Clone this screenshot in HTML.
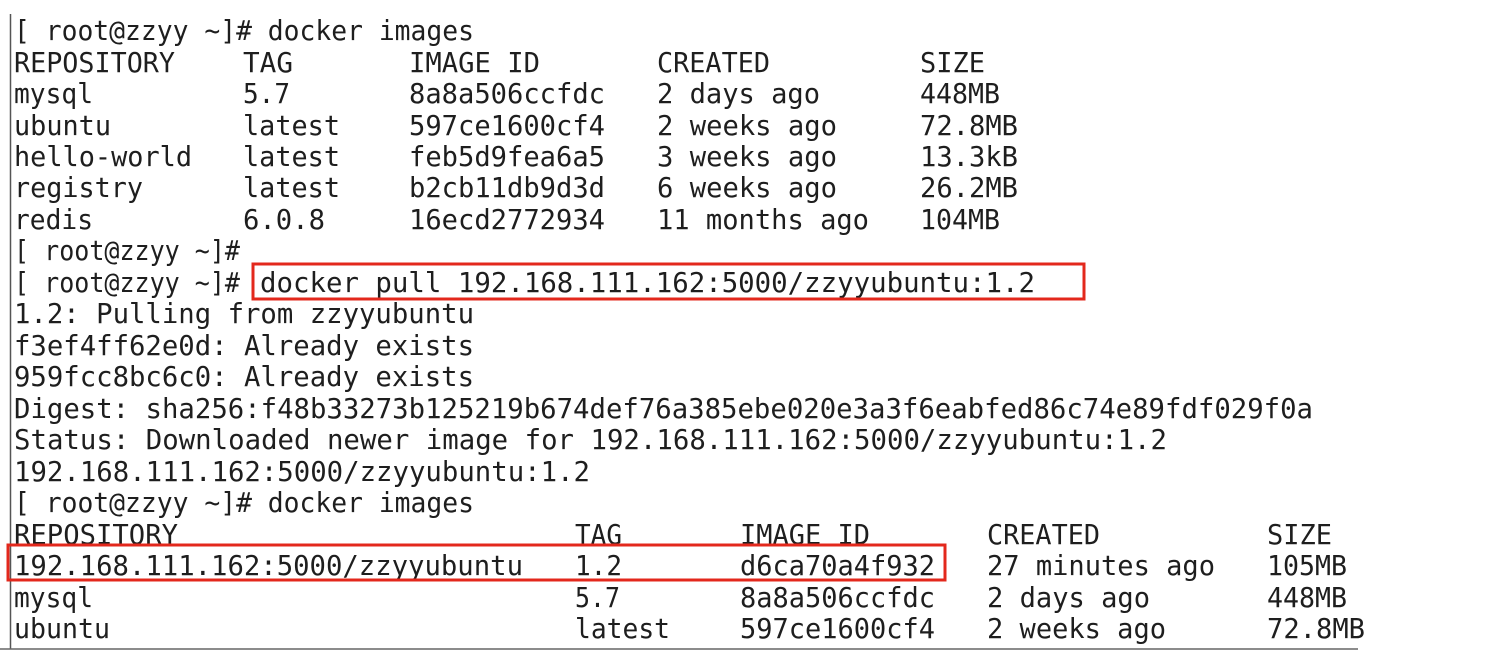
<!DOCTYPE html>
<html><head><meta charset="utf-8"><style>
html,body{margin:0;padding:0;background:#fff;width:1500px;height:666px;overflow:hidden}
svg{display:block}
text{font-family:"DejaVu Sans Mono","Liberation Mono",monospace;font-size:28px;fill:#1e1e1e}
</style></head><body>
<svg width="1500" height="666" xmlns="http://www.w3.org/2000/svg">
<line x1="10.5" y1="14" x2="10.5" y2="649" stroke="#555" stroke-width="1.5"/>
<line x1="0" y1="649" x2="1358" y2="649" stroke="#666" stroke-width="1.5"/>
<g>
<text x="14" y="40" textLength="460" lengthAdjust="spacingAndGlyphs">[ root@zzyy ~]# docker images</text>

<text x="14" y="72" textLength="161" lengthAdjust="spacingAndGlyphs">REPOSITORY</text>
<text x="243" y="72" textLength="50" lengthAdjust="spacingAndGlyphs">TAG</text>
<text x="409" y="72" textLength="131" lengthAdjust="spacingAndGlyphs">IMAGE ID</text>
<text x="657" y="72" textLength="113" lengthAdjust="spacingAndGlyphs">CREATED</text>
<text x="920" y="72" textLength="65" lengthAdjust="spacingAndGlyphs">SIZE</text>

<text x="14" y="103" textLength="79" lengthAdjust="spacingAndGlyphs">mysql</text>
<text x="243" y="103" textLength="47" lengthAdjust="spacingAndGlyphs">5.7</text>
<text x="409" y="103" textLength="196" lengthAdjust="spacingAndGlyphs">8a8a506ccfdc</text>
<text x="657" y="103" textLength="163" lengthAdjust="spacingAndGlyphs">2 days ago</text>
<text x="920" y="103" textLength="80" lengthAdjust="spacingAndGlyphs">448MB</text>

<text x="14" y="135" textLength="97" lengthAdjust="spacingAndGlyphs">ubuntu</text>
<text x="243" y="135" textLength="97" lengthAdjust="spacingAndGlyphs">latest</text>
<text x="409" y="135" textLength="196" lengthAdjust="spacingAndGlyphs">597ce1600cf4</text>
<text x="657" y="135" textLength="180" lengthAdjust="spacingAndGlyphs">2 weeks ago</text>
<text x="920" y="135" textLength="98" lengthAdjust="spacingAndGlyphs">72.8MB</text>

<text x="14" y="166" textLength="178" lengthAdjust="spacingAndGlyphs">hello-world</text>
<text x="243" y="166" textLength="97" lengthAdjust="spacingAndGlyphs">latest</text>
<text x="409" y="166" textLength="196" lengthAdjust="spacingAndGlyphs">feb5d9fea6a5</text>
<text x="657" y="166" textLength="180" lengthAdjust="spacingAndGlyphs">3 weeks ago</text>
<text x="920" y="166" textLength="98" lengthAdjust="spacingAndGlyphs">13.3kB</text>

<text x="14" y="197" textLength="129" lengthAdjust="spacingAndGlyphs">registry</text>
<text x="243" y="197" textLength="97" lengthAdjust="spacingAndGlyphs">latest</text>
<text x="409" y="197" textLength="196" lengthAdjust="spacingAndGlyphs">b2cb11db9d3d</text>
<text x="657" y="197" textLength="180" lengthAdjust="spacingAndGlyphs">6 weeks ago</text>
<text x="920" y="197" textLength="98" lengthAdjust="spacingAndGlyphs">26.2MB</text>

<text x="14" y="229" textLength="79" lengthAdjust="spacingAndGlyphs">redis</text>
<text x="243" y="229" textLength="82" lengthAdjust="spacingAndGlyphs">6.0.8</text>
<text x="409" y="229" textLength="196" lengthAdjust="spacingAndGlyphs">16ecd2772934</text>
<text x="657" y="229" textLength="212" lengthAdjust="spacingAndGlyphs">11 months ago</text>
<text x="920" y="229" textLength="80" lengthAdjust="spacingAndGlyphs">104MB</text>

<text x="14" y="260" textLength="226" lengthAdjust="spacingAndGlyphs">[ root@zzyy ~]#</text>
<text x="14" y="292" textLength="226" lengthAdjust="spacingAndGlyphs">[ root@zzyy ~]#</text>
<text x="260" y="292" textLength="775" lengthAdjust="spacingAndGlyphs">docker pull 192.168.111.162:5000/zzyyubuntu:1.2</text>
<text x="14" y="323" textLength="460" lengthAdjust="spacingAndGlyphs">1.2:  Pulling from zzyyubuntu</text>
<text x="14" y="355" textLength="460" lengthAdjust="spacingAndGlyphs">f3ef4ff62e0d: Already exists</text>
<text x="14" y="386" textLength="460" lengthAdjust="spacingAndGlyphs">959fcc8bc6c0: Already exists</text>
<text x="14" y="418" textLength="1299" lengthAdjust="spacingAndGlyphs">Digest: sha256:f48b33273b125219b674def76a385ebe020e3a3f6eabfed86c74e89fdf029f0a</text>
<text x="14" y="449" textLength="1153" lengthAdjust="spacingAndGlyphs">Status: Downloaded newer image for 192.168.111.162:5000/zzyyubuntu:1.2</text>
<text x="14" y="481" textLength="576" lengthAdjust="spacingAndGlyphs">192.168.111.162:5000/zzyyubuntu:1.2</text>
<text x="14" y="512" textLength="460" lengthAdjust="spacingAndGlyphs">[ root@zzyy ~]# docker images</text>

<text x="14" y="544" textLength="164" lengthAdjust="spacingAndGlyphs">REPOSITORY</text>
<text x="575" y="544" textLength="47" lengthAdjust="spacingAndGlyphs">TAG</text>
<text x="740" y="544" textLength="130" lengthAdjust="spacingAndGlyphs">IMAGE ID</text>
<text x="987" y="544" textLength="113" lengthAdjust="spacingAndGlyphs">CREATED</text>
<text x="1267" y="544" textLength="65" lengthAdjust="spacingAndGlyphs">SIZE</text>

<text x="14" y="575" textLength="509" lengthAdjust="spacingAndGlyphs">192.168.111.162:5000/zzyyubuntu</text>
<text x="575" y="575" textLength="47" lengthAdjust="spacingAndGlyphs">1.2</text>
<text x="740" y="575" textLength="195" lengthAdjust="spacingAndGlyphs">d6ca70a4f932</text>
<text x="987" y="575" textLength="228" lengthAdjust="spacingAndGlyphs">27 minutes ago</text>
<text x="1267" y="575" textLength="80" lengthAdjust="spacingAndGlyphs">105MB</text>

<text x="14" y="607" textLength="79" lengthAdjust="spacingAndGlyphs">mysql</text>
<text x="575" y="607" textLength="45" lengthAdjust="spacingAndGlyphs">5.7</text>
<text x="740" y="607" textLength="195" lengthAdjust="spacingAndGlyphs">8a8a506ccfdc</text>
<text x="987" y="607" textLength="163" lengthAdjust="spacingAndGlyphs">2 days ago</text>
<text x="1267" y="607" textLength="80" lengthAdjust="spacingAndGlyphs">448MB</text>

<text x="14" y="638" textLength="96" lengthAdjust="spacingAndGlyphs">ubuntu</text>
<text x="575" y="638" textLength="95" lengthAdjust="spacingAndGlyphs">latest</text>
<text x="740" y="638" textLength="195" lengthAdjust="spacingAndGlyphs">597ce1600cf4</text>
<text x="987" y="638" textLength="179" lengthAdjust="spacingAndGlyphs">2 weeks ago</text>
<text x="1267" y="638" textLength="98" lengthAdjust="spacingAndGlyphs">72.8MB</text>
</g>
<rect x="253" y="264" width="831" height="35" fill="none" stroke="#e3281c" stroke-width="3"/>
<rect x="8" y="545" width="937" height="35" fill="none" stroke="#e3281c" stroke-width="3"/>
</svg>
</body></html>
